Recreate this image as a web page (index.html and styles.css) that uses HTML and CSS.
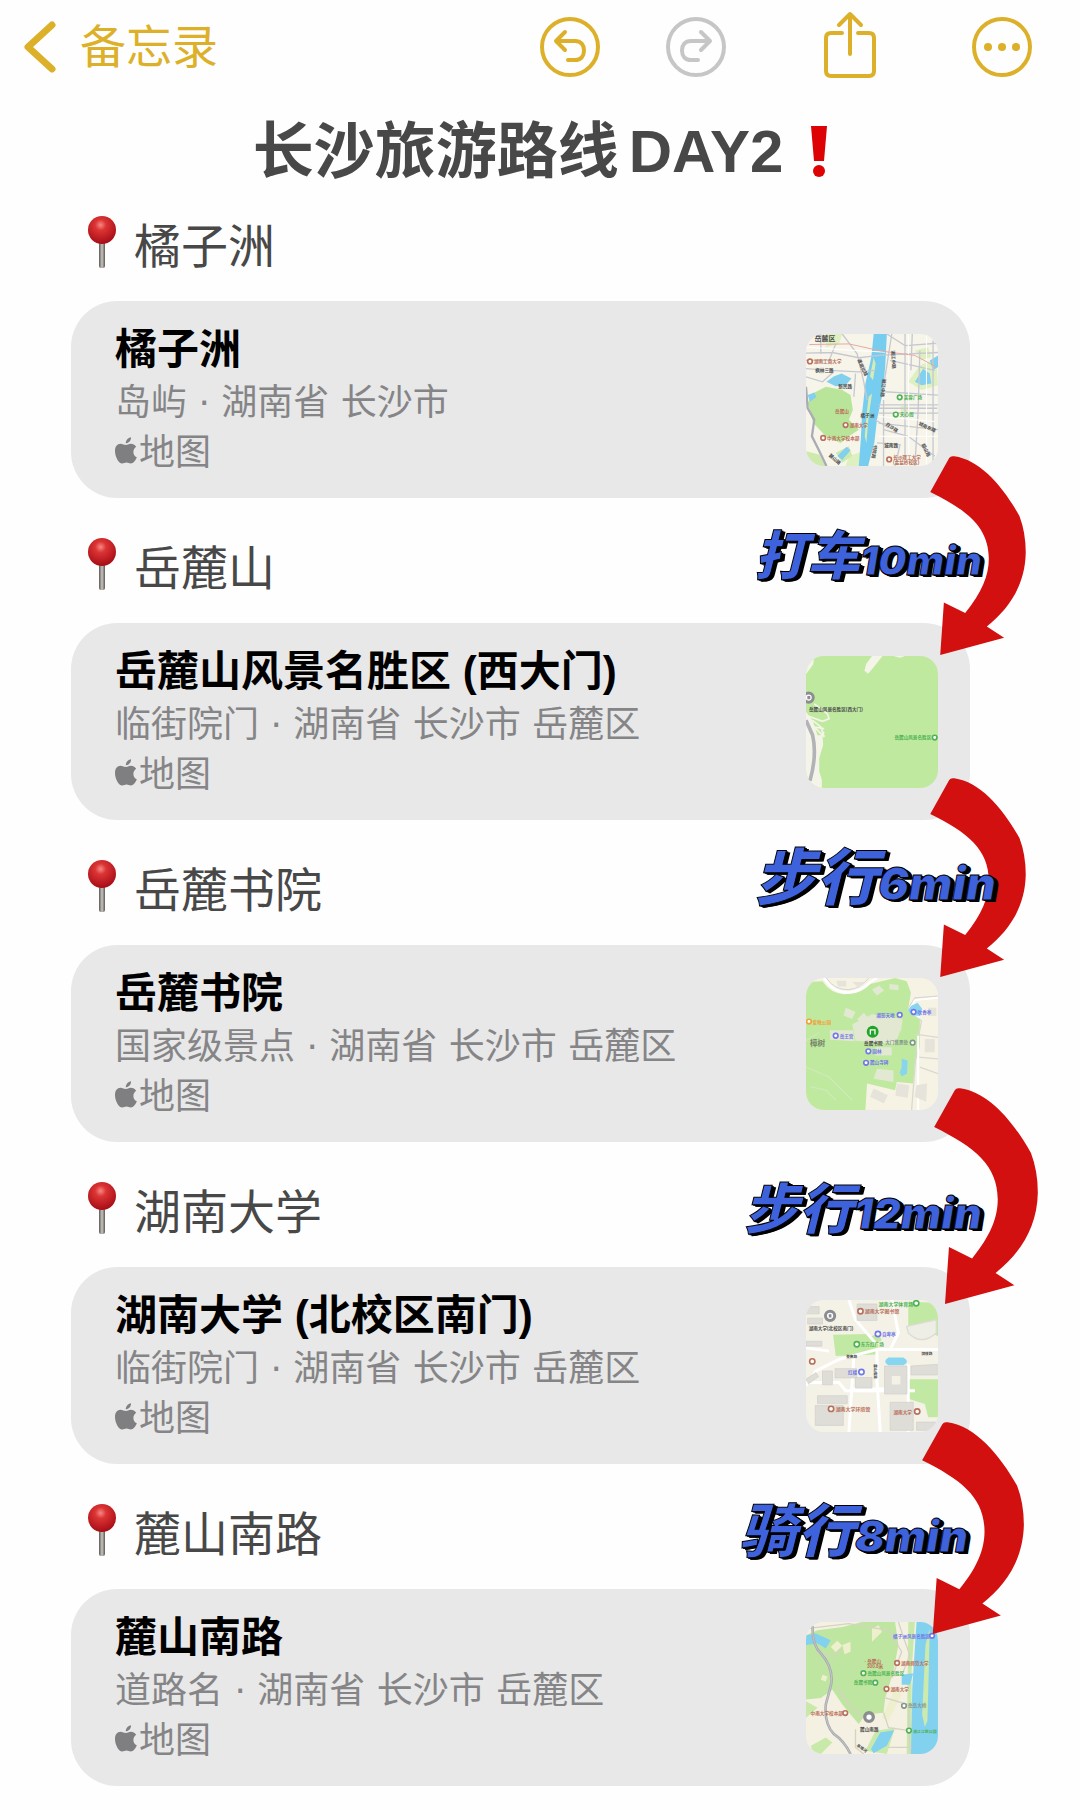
FILE: index.html
```html
<!DOCTYPE html>
<html lang="zh-CN">
<head>
    <meta charset="UTF-8">
    <meta name="viewport" content="width=device-width, initial-scale=1.0">
    <title>长沙旅游路线DAY2</title>
    <link rel="stylesheet" href="styles.css">
</head>
<body>
    <!-- Shared icons -->
    <svg class="sprite" aria-hidden="true">
        <defs>
            <radialGradient id="ball" cx="45%" cy="32%" r="65%">
                <stop offset="0" stop-color="#f58a86"/>
                <stop offset="0.3" stop-color="#dc3434"/>
                <stop offset="1" stop-color="#a90f18"/>
            </radialGradient>
            <linearGradient id="needle">
                <stop offset="0" stop-color="#5c5854"/>
                <stop offset="0.5" stop-color="#c9c5c0"/>
                <stop offset="1" stop-color="#5c5854"/>
            </linearGradient>
        </defs>
        <symbol id="pin" viewBox="0 0 28 52">
            <rect x="11" y="26" width="6" height="26" rx="2" fill="url(#needle)"/>
            <circle cx="14" cy="14" r="14" fill="url(#ball)"/>
        </symbol>
        <symbol id="apple" viewBox="0 0 22 27">
            <path d="M11 8C9 8 7.500 6.700 5.500 6.700C2.200 6.700 0 9.600 0 14C0 20 3.800 26.500 7.200 26.500C8.800 26.500 9.600 25.500 11.500 25.500C13.400 25.500 14 26.500 15.800 26.500C18.500 26.500 20.600 23.400 21.800 20.300C19.600 19.300 18.400 17.500 18.400 15C18.400 12.600 19.500 11 21.200 9.800C19.900 7.800 18 6.700 15.800 6.700C13.700 6.700 12.400 8 11 8Z M10.800 6.300C10.700 3.200 13.200 0.500 16 0.200C16.300 3.500 13.600 6.300 10.800 6.300Z"/>
        </symbol>
        <symbol id="arrow" viewBox="0 0 287 598">
            <path d="M57 6Q61 -1 72 1C150 12 217 90 268 180Q287 230 287 290C285 390 235 460 170 512L222 546L30 598L41 440L105 472C155 410 176 360 176 308C175 215 115 165 0 108Z"/>
        </symbol>
    </svg>

    <header class="toolbar">
        <a class="back" href="#">
            <svg width="32" height="52" viewBox="0 0 32 52"><path d="M28 4L4 26L28 48"/></svg>
            <span>备忘录</span>
        </a>
        <div class="tools">
            <button type="button" aria-label="撤销">
                <svg width="60" height="60" viewBox="0 0 60 60">
                    <circle cx="30" cy="30" r="28"/>
                    <path d="M25 15L16 24L25 33M17 24H35C41 24 44 28 44 33.500C44 39 41 43 35 43H28"/>
                </svg>
            </button>
            <button type="button" aria-label="重做" disabled>
                <svg width="60" height="60" viewBox="0 0 60 60">
                    <circle cx="30" cy="30" r="28"/>
                    <path d="M35 15L44 24L35 33M43 24H25C19 24 16 28 16 33.500C16 39 19 43 25 43H32"/>
                </svg>
            </button>
            <button type="button" class="share" aria-label="分享">
                <svg width="54" height="68" viewBox="0 0 54 68">
                    <path d="M19 22H8Q3 22 3 27V60Q3 65 8 65H46Q51 65 51 60V27Q51 22 46 22H35M27 43V3M16 14L27 3L38 14"/>
                </svg>
            </button>
            <button type="button" class="more" aria-label="更多">
                <svg width="60" height="60" viewBox="0 0 60 60">
                    <circle cx="30" cy="30" r="28"/>
                    <g class="dots"><circle cx="16" cy="30" r="4"/><circle cx="30" cy="30" r="4"/><circle cx="44" cy="30" r="4"/></g>
                </svg>
            </button>
        </div>
    </header>

    <main>
        <h1>
            <span>长沙旅游路线</span>
            <span class="day">DAY2</span>
            <svg class="mark" width="16" height="51" viewBox="0 0 16 51"><path d="M0 0H16L13 35H3Z"/><circle cx="8" cy="45" r="6"/></svg>
        </h1>

        <section class="place">
            <h2><svg class="pin"><use href="#pin"/></svg>橘子洲</h2>
            <a class="card" href="#">
                <span class="info">
                    <strong>橘子洲</strong>
                    <span class="address">岛屿 · 湖南省 长沙市</span>
                    <span class="source"><svg><use href="#apple"/></svg>地图</span>
                </span>
                <svg class="map" viewBox="0 0 400 400">
                    <rect width="400" height="400" fill="#f7f5ea"/>
                    <g fill="#dff0c0">
                        <path d="M60 0h50l-10 30-40 10zM330 50l40-10 10 30-30 10zM130 370l60-20v50h-70zM285 220l25-5 5 25-25 5z"/>
                        <path d="M310 145l35-50 50-20 5 80-50 15z"/>
                    </g>
                    <path d="M20 180L60 160L110 170L135 185L142 230L130 260L160 290L130 310L105 330L60 310L22 270L5 210Z" fill="#b9e59a"/>
                    <path d="M0 355l40 10 20 35H0zM90 360l40-20 10 30-30 20z" fill="#cdeaac"/>
                    <path d="M205 0H245L240 100L232 180L215 260L207 330L188 400H160L166 320L170 240L180 150L198 70Z" fill="#76cdf0"/>
                    <path d="M205 72L211 90L203 140L194 128Z M190 190L200 180L190 250L183 330L178 310L184 240Z" fill="#d5edb5"/>
                    <path d="M62 145L85 128L108 120L138 135L120 155L90 158Z M330 145L355 105L375 120L380 150L350 155Z M375 80L400 65V100L385 110Z M5 185l20-8 7 14-20 14z M95 370l28-28 12 10-25 30z" fill="#83d0ee"/>
                    <g fill="none" stroke="#c6c8d0" stroke-width="4">
                        <path d="M0 58L80 56L160 72L230 64L400 56M0 105L70 110L160 115L210 110M0 130L50 145L80 118M110 0L155 60L175 145L185 200M240 175L400 185M220 215H400M220 240H400M245 0L300 35L398 28M300 0V370M322 0L318 110M345 50L340 230L330 400M220 270L400 290M235 290L310 310L390 370M215 330L285 335L270 400M385 20V400M210 260L250 285M150 120L145 190M0 80H70L90 30"/>
                        <path d="M220 225H398M235 200V400M255 80L390 110M260 0L230 190M45 0V60"/>
                    </g>
                    <g fill="none" stroke="#fff" stroke-width="3"><path d="M0 40L150 50L240 55M220 250L390 265M220 310H400M310 0L312 400M365 0V400"/></g>
                    <path d="M0 160L5 225L25 260L18 310L38 350L62 400" fill="none" stroke="#a9abb5" stroke-width="7"/>
                    <path d="M10 32L130 30L230 52L330 65L395 100" fill="none" stroke="#e6a8a2" stroke-width="3"/>
                    <g class="poi red">
                        <circle cx="12" cy="83" r="7"/><text x="24" y="88">湖南工商大学</text>
                        <circle cx="120" cy="276" r="7"/><text x="132" y="281">湖南大学</text>
                        <circle cx="52" cy="315" r="7"/><text x="64" y="320">中南大学校本部</text>
                        <circle cx="252" cy="380" r="7"/><text x="264" y="380">长沙理工大学</text><text x="264" y="395">(金盆岭校区)</text>
                        <text x="88" y="239">岳麓山</text>
                    </g>
                    <g class="poi green">
                        <circle cx="284" cy="192" r="7"/><text x="296" y="197">芙蓉广场</text>
                        <circle cx="272" cy="244" r="7"/><text x="284" y="249">天心阁</text>
                    </g>
                    <g class="poi road">
                        <text x="26" y="20" font-size="21">岳麓区</text>
                        <text x="28" y="116">枫林三路</text><text x="98" y="165">新民路</text><text x="165" y="253">橘子洲</text>
                        <text x="237" y="343">城南路</text><text x="155" y="78" transform="rotate(65 155 78)">潇湘北路</text>
                        <text x="258" y="50" transform="rotate(86 258 50)">湘江中路</text><text x="232" y="135" transform="rotate(96 232 135)">湘江中路</text>
                        <text x="205" y="335" transform="rotate(98 205 335)">书院路</text><text x="240" y="275" transform="rotate(35 240 275)">白沙路</text>
                        <text x="340" y="275" transform="rotate(25 340 275)">城南东路</text><text x="350" y="335" transform="rotate(65 350 335)">韶山路</text>
                        <text x="68" y="370" transform="rotate(40 68 370)">麓山路</text>
                    </g>
                </svg>
            </a>
            <div class="leg leg-taxi">
                <svg class="arrow"><use href="#arrow"/></svg>
                <p>打车<span>10min</span></p>
            </div>
        </section>

        <section class="place">
            <h2><svg class="pin"><use href="#pin"/></svg>岳麓山</h2>
            <a class="card" href="#">
                <span class="info">
                    <strong>岳麓山风景名胜区 (西大门)</strong>
                    <span class="address">临街院门 · 湖南省 长沙市 岳麓区</span>
                    <span class="source"><svg><use href="#apple"/></svg>地图</span>
                </span>
                <svg class="map" viewBox="0 0 400 400">
                    <rect width="400" height="400" fill="#bfe99f"/>
                    <path d="M0 0H25L22 25L0 55ZM200 0H232L200 40L188 54L177 45L182 25ZM265 0h35l-15 5zM0 170L20 195L35 240H50L52 270L40 310V350L48 375V400H0Z" fill="#f5f4e8"/>
                    <path d="M25 145L65 175L70 190L50 198L0 180M20 195L45 215L55 245L25 215L55 220M40 250L55 230" fill="none" stroke="#f5f4e8" stroke-width="5"/>
                    <path d="M0 195L20 240Q34 300 12 378" fill="none" stroke="#b1b3b8" stroke-width="11"/>
                    <circle cx="8" cy="126" r="14" fill="#fff" stroke="#8c8d90" stroke-width="9"/>
                    <rect x="4" y="121" width="9" height="10" fill="#8c8d90"/>
                    <g class="poi road"><text x="9" y="167">岳麓山风景名胜区(西大门)</text></g>
                    <g class="poi green"><text x="268" y="252">岳麓山风景名胜区</text><circle cx="390" cy="247" r="7"/></g>
                </svg>
            </a>
            <div class="leg leg-academy">
                <svg class="arrow"><use href="#arrow"/></svg>
                <p>步行<span>6min</span></p>
            </div>
        </section>

        <section class="place">
            <h2><svg class="pin"><use href="#pin"/></svg>岳麓书院</h2>
            <a class="card" href="#">
                <span class="info">
                    <strong>岳麓书院</strong>
                    <span class="address">国家级景点 · 湖南省 长沙市 岳麓区</span>
                    <span class="source"><svg><use href="#apple"/></svg>地图</span>
                </span>
                <svg class="map" viewBox="0 0 400 400">
                    <rect width="400" height="400" fill="#f6f3e5"/>
                    <path d="M0 12L50 10Q80 55 130 48Q170 45 195 18L270 0L305 10L318 45L310 90L345 120V210L330 260L325 320L275 315L270 340L185 320L180 400H0Z" fill="#bfe99f"/>
                    <path d="M55 0Q85 48 130 44Q165 42 195 12L215 0" fill="none" stroke="#fff" stroke-width="8"/>
                    <path d="M62 0Q85 37 130 35Q165 32 190 0" fill="none" stroke="#d6d6cf" stroke-width="3"/>
                    <path d="M400 55L330 60L308 95L350 130L335 210L320 400M330 170L400 180M340 240L400 245M345 270L400 290" fill="none" stroke="#d9d8d1" stroke-width="4"/>
                    <path d="M400 60L330 67L313 97L345 120M340 175V400" fill="none" stroke="#fff" stroke-width="6"/>
                    <g fill="#e2e8d2">
                        <path d="M120 90l30 12-10 22-26-10zM200 35l22-12 15 15-22 15zM253 18l27 3v16l-27-3zM140 140l60-30 70 10 20 30-20 50-120-10zM72 158h70l6 34-75-5zM210 210h50v25h-50zM215 275l50 5v35l-60-10zM155 125l20-20 15 18-20 15zM265 120l28 5-5 35-25-5z"/>
                    </g>
                    <g fill="#e5e3da"><path d="M205 335l43 20-12 25-42-20zM275 320l38 5-5 38-37-6zM335 325l32-5-3 55-35-15zM92 8l30 0v18h-25zM140 12h38l-18 18zM370 90h25v25h-25zM360 185h30v40h-30z"/></g>
                    <path d="M0 270L70 300L140 370M15 330L60 340L90 370M40 165L0 190" fill="none" stroke="#cfe9ba" stroke-width="4"/>
                    <path d="M318 85l20-10 14 18-6 22-25-2-12-15zM290 245l18 5-2 40-16 8-6-12 6-15z" fill="#87d5ef"/>
                    <circle cx="202" cy="163" r="18" fill="#20a327"/>
                    <path d="M195 171V157H209V171" fill="none" stroke="#fff" stroke-width="4"/>
                    <g class="poi blue">
                        <text x="213" y="119">湘影天地</text><circle cx="284" cy="112" r="7"/>
                        <circle cx="326" cy="103" r="7"/><text x="338" y="108">吹香亭</text>
                        <circle cx="90" cy="175" r="7"/><text x="102" y="181">岳王宫</text>
                        <circle cx="189" cy="222" r="7"/><text x="201" y="227">园林</text>
                        <circle cx="182" cy="257" r="7"/><text x="194" y="262">麓山寺碑</text>
                    </g>
                    <g class="poi orange"><circle cx="9" cy="132" r="7"/><text x="20" y="138">爱晚公园</text></g>
                    <g class="poi road"><text class="wood" x="12" y="207" font-size="23">樟树</text><text x="176" y="204">岳麓书院</text></g>
                    <g class="poi gray"><text x="240" y="201">大门售票处</text><circle cx="323" cy="196" r="7"/></g>
                </svg>
            </a>
            <div class="leg leg-university">
                <svg class="arrow"><use href="#arrow"/></svg>
                <p>步行<span>12min</span></p>
            </div>
        </section>

        <section class="place">
            <h2><svg class="pin"><use href="#pin"/></svg>湖南大学</h2>
            <a class="card" href="#">
                <span class="info">
                    <strong>湖南大学 (北校区南门)</strong>
                    <span class="address">临街院门 · 湖南省 长沙市 岳麓区</span>
                    <span class="source"><svg><use href="#apple"/></svg>地图</span>
                </span>
                <svg class="map" viewBox="0 0 400 400">
                    <rect width="400" height="400" fill="#f4f2e7"/>
                    <path d="M82 105L185 103L220 135L215 165L90 170ZM190 112l30-10 10 20-20 10zM310 5L400 8V110L360 90H310ZM312 240H400V355H370L360 315L312 300Z" fill="#c2e9a4"/>
                    <path d="M305 80L395 60V100Q350 140 310 100Z" fill="#eeeee7" stroke="#dcdcd5" stroke-width="4"/>
                    <path d="M0 260L30 215L100 180L215 150H400M215 150V240L225 400M0 145L70 155M130 0L150 60L210 130M140 270H300M145 170L130 400M310 195V400M260 0L280 100L255 150M0 250H100L120 275H330" fill="none" stroke="#fff" stroke-width="9"/>
                    <g fill="#deddd8" stroke="#cfcec8" stroke-width="2">
                        <path d="M0 20h40v22H0zM5 55h45v18H5zM155 12h60v50h-60zM50 215h30v42h-30zM88 208h65v28h-65zM238 200h68v85h-68zM318 200l80-5v32h-80zM35 290h90v24H35zM28 320h85v60H28zM255 310h70v85h-70zM0 125h48v15H0zM0 240l30-20 8 12-30 22zM335 370h60v25h-60zM150 235h50v32h-50z"/>
                    </g>
                    <path d="M260 230h26v26h-26z" fill="#f4f2e7"/>
                    <path d="M250 174h45q22 12 0 24h-45q-20-12 0-24z" fill="#87d5ef"/>
                    <circle cx="73" cy="48" r="14" fill="#fff" stroke="#8c8d90" stroke-width="9"/>
                    <rect x="69" y="43" width="8" height="10" fill="#8c8d90"/>
                    <g class="poi red">
                        <circle cx="165" cy="34" r="8"/><text x="178" y="40" font-size="15">湖南大学图书馆</text>
                        <circle cx="19" cy="186" r="8"/>
                        <circle cx="76" cy="330" r="8"/><text x="90" y="336" font-size="15">湖南大学环境馆</text>
                        <text x="265" y="344">湖南大学</text><circle cx="337" cy="338" r="8"/>
                    </g>
                    <g class="poi green">
                        <text x="220" y="17" font-size="15">湖南大学体育场</text><circle cx="334" cy="10" r="8"/>
                        <circle cx="154" cy="134" r="8"/><text x="166" y="140">东方红广场</text>
                    </g>
                    <g class="poi blue"><circle cx="218" cy="103" r="8"/><text x="230" y="109">自卑亭</text><text x="127" y="225">红楼</text><circle cx="168" cy="218" r="8"/></g>
                    <g class="poi road"><text x="8" y="90">湖南大学(北校区南门)</text><text x="122" y="175" font-size="11">登高路</text><text x="350" y="166" font-size="11">牌楼路</text><text x="207" y="195" font-size="11" transform="rotate(90 207 195)">麓山南路</text></g>
                </svg>
            </a>
            <div class="leg leg-bike">
                <svg class="arrow"><use href="#arrow"/></svg>
                <p>骑行<span>8min</span></p>
            </div>
        </section>

        <section class="place">
            <h2><svg class="pin"><use href="#pin"/></svg>麓山南路</h2>
            <a class="card" href="#">
                <span class="info">
                    <strong>麓山南路</strong>
                    <span class="address">道路名 · 湖南省 长沙市 岳麓区</span>
                    <span class="source"><svg><use href="#apple"/></svg>地图</span>
                </span>
                <svg class="map" viewBox="0 0 400 400">
                    <rect width="400" height="400" fill="#f5f1e2"/>
                    <path d="M35 25L110 15L170 0H270L280 70L265 150L240 230L235 275L180 280L160 310L110 250L80 205L45 230L0 235V40Z" fill="#bfe6a0"/>
                    <path d="M15 375L60 350L80 365L45 400H20ZM310 0H330L320 150V400H305ZM180 390L210 330L270 320L245 400ZM0 240L35 260L0 290Z" fill="#c9e9ab"/>
                    <path d="M75 75l20-18 15 15-20 20zM110 70l25-10v30l-18 8zM200 20l20-10 10 20-30 30zM270 200l-40 90 20 10 40-80zM50 160l15 5-5 15-15-5z" fill="#edefcd"/>
                    <path d="M335 0H400V400H318L322 200ZM0 40L30 35L75 55L60 80L35 65L0 70ZM290 160L325 155L315 190H290ZM197 385L225 335L267 328L245 375L205 398Z" fill="#82d1ef"/>
                    <path d="M362 70L375 20L372 150L368 300L360 318L352 280Z" fill="#cce9ae"/>
                    <path d="M0 20L130 5L250 25L290 90L260 170M280 0L300 60L315 100L295 150M240 230L310 250L315 400M235 275L250 320L320 330M250 380H320M150 325V380L175 400M30 90L80 105L110 80M95 200L130 250L170 290" fill="none" stroke="#d6d2c4" stroke-width="4"/>
                    <path d="M20 12Q18 70 45 95Q85 140 76 190L60 250Q55 310 85 340Q115 360 135 400" fill="none" stroke="#a8aab0" stroke-width="8"/>
                    <path d="M20 12Q18 70 45 95Q85 140 76 190L60 250Q55 310 85 340Q115 360 135 400" fill="none" stroke="#d4d5d8" stroke-width="2"/>
                    <circle cx="191" cy="288" r="13" fill="#fff" stroke="#8c8d90" stroke-width="10"/>
                    <g class="poi red">
                        <circle cx="276" cy="124" r="7"/><text x="288" y="129">湖南师范大学</text>
                        <circle cx="244" cy="203" r="7"/><text x="256" y="208">湖南大学</text>
                        <text x="14" y="282">中南大学校本部</text><circle cx="119" cy="276" r="7"/>
                        <text x="177" y="125">· 岳麓山</text><text x="185" y="139">300.8米</text>
                    </g>
                    <g class="poi green">
                        <circle cx="174" cy="155" r="7"/><text x="186" y="161">岳麓山风景名胜区</text>
                        <text x="145" y="189">岳麓书院</text><circle cx="210" cy="184" r="7"/>
                        <circle cx="312" cy="329" r="7"/><text x="324" y="335" font-size="12">湘江江豚公园</text>
                    </g>
                    <g class="poi gray"><circle cx="297" cy="254" r="7"/><text x="309" y="259">岳岛大桥</text></g>
                    <g class="poi blue"><text x="264" y="48">橘子洲风景名胜区</text><circle cx="382" cy="42" r="7"/></g>
                    <g class="poi road"><text x="164" y="331">麓山南路</text><text x="152" y="376" font-size="12" transform="rotate(35 152 376)">阜埠河</text></g>
                </svg>
            </a>
        </section>
    </main>
</body>
</html>
```

FILE: styles.css
```css
* {
    box-sizing: border-box;
}
body {
    margin: 0;
    padding-bottom: 20px;
    background-color: #fefefe;
    color: #484848;
    font-family: "Liberation Sans", "Noto Sans CJK SC", sans-serif;
}
a {
    color: inherit;
    text-decoration: none;
}
.sprite {
    position: absolute;
    width: 0;
    height: 0;
}

/* Toolbar */
.toolbar {
    display: flex;
    align-items: center;
    justify-content: space-between;
    height: 94px;
    padding: 0 48px 0 24px;
    color: #ddb02a;
}
.toolbar svg {
    display: block;
    fill: none;
    stroke: currentColor;
    stroke-width: 4;
    stroke-linecap: round;
    stroke-linejoin: round;
}
.toolbar .back svg {
    stroke-width: 7;
}
.back {
    display: flex;
    align-items: center;
    gap: 24px;
    font-size: 46px;
    line-height: 60px;
}
.tools {
    display: flex;
    align-items: center;
}
.tools button {
    margin: 0 0 0 66px;
    padding: 0;
    border: none;
    background: none;
    color: inherit;
    cursor: pointer;
}
.tools button:disabled {
    color: #c6c6c6;
}
.tools .share {
    margin: 0 0 4px 97px;
}
.tools .more {
    margin-left: 95px;
}
.toolbar .dots {
    fill: currentColor;
    stroke: none;
}

/* Note */
h1 {
    display: flex;
    align-items: center;
    justify-content: center;
    height: 97px;
    margin: 0;
    padding-top: 18px;
    font-size: 61px;
    line-height: 80px;
}
.day {
    margin: 0 28px 0 10px;
    font-size: 60px;
}
.mark {
    fill: #dd0204;
}
.place {
    position: relative;
    margin: 0 110px 15px 71px;
}
h2 {
    display: flex;
    align-items: center;
    gap: 18px;
    height: 110px;
    margin: 0;
    padding: 0 0 8px 17px;
    font-size: 47px;
    font-weight: normal;
}
.pin {
    width: 28px;
    height: 52px;
}
.card {
    display: flex;
    justify-content: space-between;
    align-items: center;
    height: 197px;
    padding: 0 32px 0 44px;
    border-radius: 46px;
    background-color: #e8e8e8;
}
.info {
    display: flex;
    flex-direction: column;
    color: #858587;
    font-size: 36px;
    line-height: 50px;
}
.info strong {
    color: #000;
    font-size: 42px;
    line-height: 56px;
}
.address {
    font-family: "DejaVu Sans", "Noto Sans CJK SC", sans-serif;
}
.source {
    display: flex;
    align-items: center;
}
.source svg {
    width: 22px;
    height: 27px;
    margin: 0 2px 4px 0;
    fill: #7f7f81;
}

/* Map thumbnails */
.map {
    flex: none;
    width: 132px;
    height: 132px;
    border-radius: 18px;
}
.poi {
    font-size: 14px;
    font-weight: bold;
}
.poi circle {
    fill: #fff;
    stroke: currentColor;
    stroke-width: 5;
}
.poi text {
    fill: currentColor;
}
.poi .wood {
    fill: #75836a;
}
.red {
    color: #b9705a;
}
.green {
    color: #4fb356;
}
.blue {
    color: #7378e8;
}
.orange {
    color: #efa23c;
}
.gray {
    color: #83978a;
}
.road {
    color: #4c4c4c;
}

/* Travel legs between two places, drawn over the cards */
.leg p {
    position: absolute;
    top: 327px;
    right: -12px;
    z-index: 2;
    margin: 0;
    color: #3d62dc;
    font-family: Inter, "Noto Sans CJK SC", sans-serif;
    font-size: 53px;
    font-style: italic;
    font-weight: 900;
    line-height: 76px;
    white-space: nowrap;
    -webkit-text-stroke: 1px #000;
    text-shadow: 1px 1px 0 #000, 2px 1px 0 #000, 3px 2px 0 #000, 4px 2px 0 #000;
}
.leg span {
    font-size: 40px;
}
.arrow {
    position: absolute;
    top: 265px;
    right: -56px;
    z-index: 1;
    width: 96px;
    height: 199px;
    fill: #d1100f;
}
.leg-academy p {
    right: -26px;
    font-size: 62px;
}
.leg-academy span {
    font-size: 46px;
}
.leg-university p {
    top: 336px;
    font-size: 55px;
}
.leg-university span {
    font-size: 43px;
}
.leg-university .arrow {
    top: 253px;
    right: -68px;
    width: 104px;
    height: 216px;
}
.leg-bike p {
    top: 336px;
    right: 2px;
    font-size: 58px;
}
.leg-bike span {
    font-size: 44px;
}
.leg-bike .arrow {
    right: -54px;
    width: 102px;
    height: 212px;
}
```
